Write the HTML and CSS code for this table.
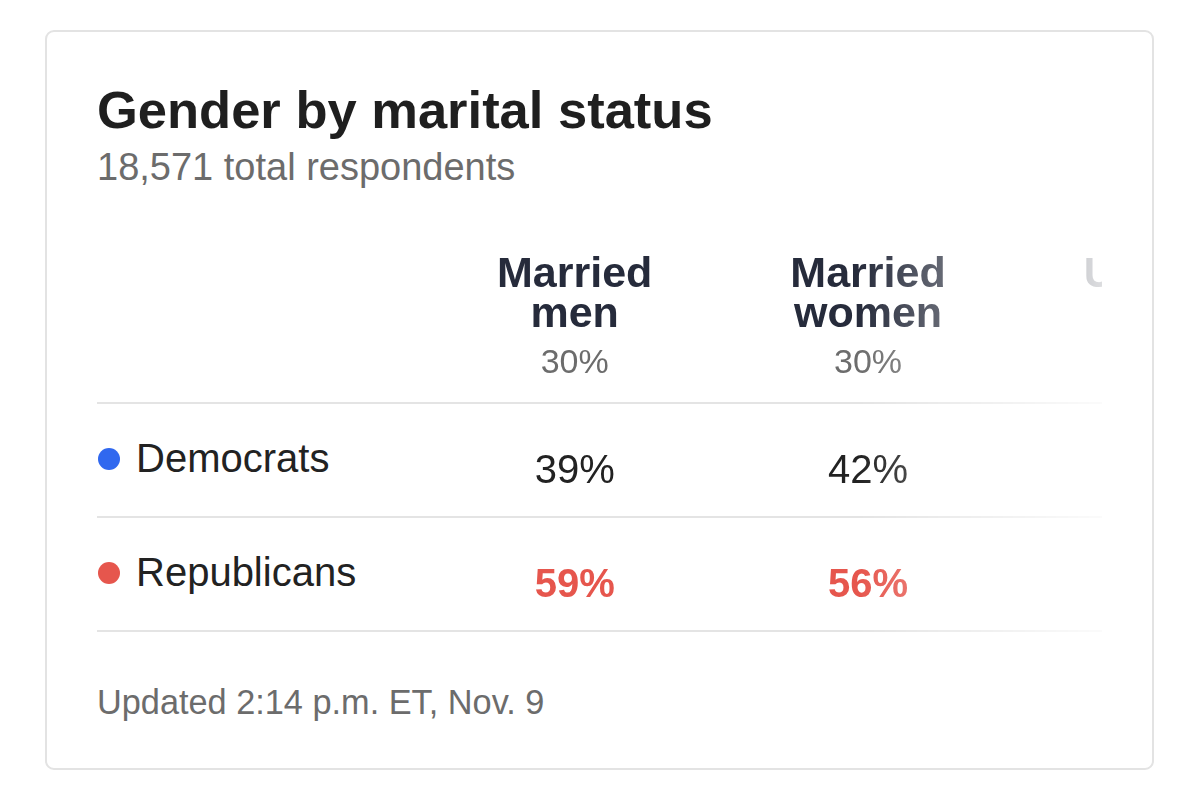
FILE: index.html
```html
<!DOCTYPE html>
<html lang="en">
<head>
<meta charset="utf-8">
<title>Gender by marital status</title>
<link rel="stylesheet" href="styles.css">
</head>
<body>
  <section class="card">
    <h1 class="title">Gender by marital status</h1>
    <p class="subtitle">18,571 total respondents</p>
    <div class="table">
      <div class="labels">
        <div class="head-cell"></div>
        <div class="row-label"><span class="dot dot-dem"></span>Democrats</div>
        <div class="row-label"><span class="dot dot-rep"></span>Republicans</div>
      </div>
      <div class="scroller">
        <div class="grid">
          <div class="head-cell col">
            <div class="colname">Married men</div>
            <div class="colpct">30%</div>
          </div>
          <div class="head-cell col">
            <div class="colname">Married women</div>
            <div class="colpct">30%</div>
          </div>
          <div class="head-cell col">
            <div class="colname">Unmarried men</div>
          </div>

          <div class="value col">39%</div>
          <div class="value col">42%</div>
          <div class="value col"></div>

          <div class="value col rep">59%</div>
          <div class="value col rep">56%</div>
          <div class="value col rep"></div>
        </div>
      </div>
    </div>
    <p class="updated">Updated 2:14 p.m. ET, Nov. 9</p>
  </section>
</body>
</html>
```

FILE: styles.css
```css
* {
  box-sizing: border-box;
}

html, body {
  margin: 0;
  background: #ffffff;
}

body {
  padding: 30px 0 0 45px;
  font-family: "Liberation Sans", Arial, sans-serif;
  color: #222222;
}

.card {
  width: 1109px;
  height: 740px;
  border: 2px solid #e3e3e3;
  border-radius: 9px;
  background: #ffffff;
  padding: 48px 50px 46px 50px;
}

.title {
  margin: 0;
  font-size: 52.5px;
  line-height: 60px;
  font-weight: 700;
  color: #1f1f1f;
}

.subtitle {
  margin: 5px 0 0 0;
  font-size: 38px;
  line-height: 44px;
  color: #6c6c6c;
}

.table {
  display: flex;
  margin-top: 59px;
}

.labels {
  width: 331px;
  flex: none;
}

.head-cell {
  height: 156px;
  border-bottom: 2px solid #e4e4e4;
}

.row-label {
  display: flex;
  align-items: flex-start;
  height: 114px;
  padding-top: 30px;
  border-bottom: 2px solid #e4e4e4;
  font-size: 40px;
  line-height: 48px;
  color: #222222;
}

.dot {
  width: 22px;
  height: 22px;
  border-radius: 50%;
  margin: 14px 16px 0 1px;
  flex: none;
}

.dot-dem {
  background: #3068ef;
}

.dot-rep {
  background: #e6564d;
}

.scroller {
  flex: 1;
  overflow: hidden;
  -webkit-mask-image: linear-gradient(to right, #000 430px, transparent 720px);
  mask-image: linear-gradient(to right, #000 430px, transparent 720px);
}

.grid {
  display: grid;
  grid-template-columns: repeat(3, max-content);
  width: max-content;
}

.col {
  padding-left: 69px;
  padding-right: 69px;
  text-align: center;
}

.colname {
  width: min-content;
  margin: 0 auto;
  padding: 4px 0;
  font-size: 43px;
  line-height: 40px;
  font-weight: 700;
  color: #262b3b;
}

.colpct {
  margin-top: 5px;
  font-size: 34px;
  line-height: 40px;
  color: #6c6c6c;
}

.value {
  height: 114px;
  padding-top: 41px;
  border-bottom: 2px solid #e4e4e4;
  font-size: 40px;
  line-height: 48px;
  color: #222222;
}

.value.rep {
  font-weight: 700;
  color: #e6564d;
}

.updated {
  margin: 50px 0 0 0;
  font-size: 34.3px;
  line-height: 40px;
  color: #6c6c6c;
}
```
